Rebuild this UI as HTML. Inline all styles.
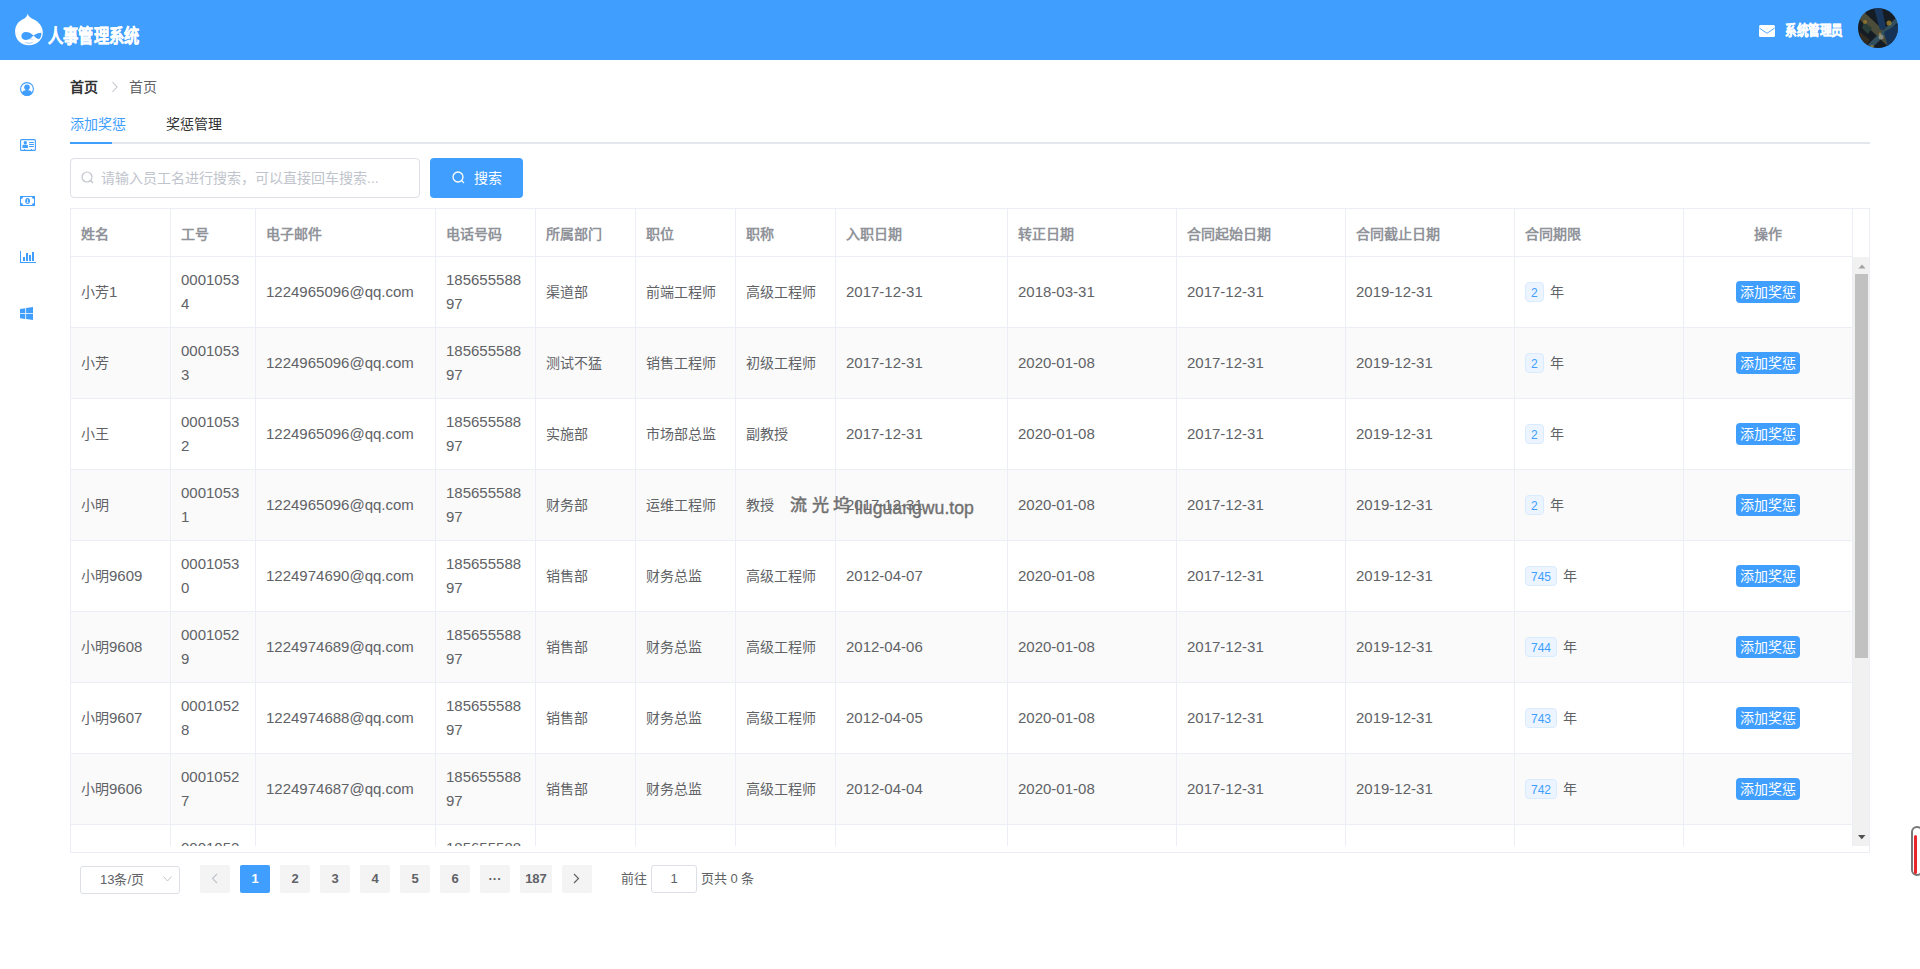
<!DOCTYPE html>
<html lang="zh-CN"><head><meta charset="utf-8">
<style>
*{box-sizing:border-box;margin:0;padding:0}
html,body{width:1920px;height:969px;overflow:hidden;background:#fff}
body{position:relative;font-family:"Liberation Sans",sans-serif;font-size:14px;color:#606266}
.abs{position:absolute}
.hdr{left:0;top:0;width:1920px;height:60px;background:#409EFF}
.logo{left:15px;top:13px;width:29px;height:33px}
.title{left:48px;top:24px;height:26px;font-size:19px;font-weight:bold;color:#fff;-webkit-text-stroke:0.4px #fff;line-height:26px;white-space:nowrap;transform:scaleX(0.80);transform-origin:0 50%}
.mail{left:1759px;top:25px;width:16px;height:12px}
.uname{left:1785px;top:20px;font-size:14px;font-weight:bold;color:#fff;-webkit-text-stroke:0.4px #fff;line-height:20px;white-space:nowrap;transform:scaleX(0.83);transform-origin:0 50%}
.avatar{left:1858px;top:8px;width:40px;height:40px;border-radius:50%;overflow:hidden}
.side svg{position:absolute}
.bc{top:78px;line-height:18px;white-space:nowrap}
.tabs{left:70px;top:142px;width:1800px;height:2px;background:#E4E7ED}
.tabbar{left:70px;top:142px;width:42px;height:2px;background:#409EFF}
.tab{top:114px;line-height:20px;white-space:nowrap}
.inp{left:70px;top:158px;width:350px;height:40px;border:1px solid #DCDFE6;border-radius:4px}
.ph{left:101px;top:168px;line-height:20px;color:#C0C4CC;white-space:nowrap}
.sbtn{left:430px;top:158px;width:93px;height:40px;background:#409EFF;border-radius:4px;color:#fff}
.tbl{left:70px;top:208px;width:1800px;height:645px;border:1px solid #EBEEF5;overflow:hidden;background:#fff}
table{border-collapse:separate;border-spacing:0;table-layout:fixed}
th,td{border-right:1px solid #EBEEF5;border-bottom:1px solid #EBEEF5;text-align:left;padding:0 10px;vertical-align:middle;overflow:hidden}
th{height:48px;color:#909399;font-weight:bold;white-space:nowrap}
td{height:71px;line-height:23px;color:#606266}
th.c,td.c{text-align:center}
tr.st td{background:#FAFAFA}
.bodyw{position:absolute;left:0;top:48px;width:1798px;height:589px;overflow:hidden}
.tag{display:inline-block;height:20px;line-height:20px;padding:0 5px;margin-right:2px;font-size:12px;color:#409EFF;background:#ECF5FF;border:1px solid #D9ECFF;border-radius:4px;vertical-align:middle}
.yr{vertical-align:middle}
.n{font-size:15px}
.abtn{display:inline-block;height:22px;line-height:22px;padding:0 4px;background:#409EFF;color:#fff;border-radius:4px;white-space:nowrap}
.sb{left:1853px;top:257px;width:16px;height:589px;background:#F1F1F1}
.pg{top:865px;height:28px;line-height:28px;text-align:center;font-weight:bold;color:#606266;background:#F4F4F5;border-radius:2px;font-size:13px}
.wm2{left:855px;top:495.5px;font-size:19px;line-height:24px;color:#707070;-webkit-text-stroke:0.4px #707070;white-space:nowrap;transform:scaleX(0.93);transform-origin:0 0}
.wm{left:790px;top:494px;font-size:17px;color:#707070;-webkit-text-stroke:0.5px #707070;white-space:nowrap;line-height:24px}
</style></head>
<body>
<div class="abs hdr"></div>
<svg class="abs" style="left:14px;top:13px" width="30" height="33" viewBox="0 0 30 33">
  <path d="M13.6 0.7 C14.5 3.5 17 5 20 6.5 C25 9 28.8 13.5 28.8 19.5 C28.8 27 22.5 32.3 14.8 32.3 C7 32.3 1.1 26.5 1.1 18.5 C1.1 12 5 8 9.5 6 C12 4.5 13.2 3 13.6 0.7Z" fill="#fff"/>
  <path d="M19.5 22.5 C17 20 14.5 19 12 19 C9 19 7.4 21 7.4 23 C7.4 25.5 9.5 27 12 27 C15 27 17.5 24.5 19.5 22.5 C21.5 21 24.5 19.7 27.4 19.7 C27.6 23 26.5 25.5 24.5 26.2 C22.5 25.5 21 24 19.5 22.5Z" fill="#409EFF"/>
  <path d="M15 26.5 C16 25.5 17.5 25.5 18.5 26.5" stroke="#409EFF" stroke-width="0.8" fill="none" opacity="0.6"/>
  <path d="M11.5 29.5 C13.5 30.5 16.5 30.5 18.5 29.5" stroke="#409EFF" stroke-width="0.9" fill="none" opacity="0.6"/>
</svg>
<div class="abs title">人事管理系统</div>
<svg class="abs mail" viewBox="0 0 16 12"><rect x="0" y="0" width="16" height="12" rx="1.5" fill="#fff"/><path d="M0.3 3 L8 8.3 L15.7 3" stroke="#409EFF" stroke-width="0.9" fill="none"/></svg>
<div class="abs uname">系统管理员</div>
<svg class="abs" style="left:1858px;top:8px" width="40" height="40" viewBox="0 0 40 40">
<defs><clipPath id="avc"><circle cx="20" cy="20" r="20"/></clipPath></defs>
<g clip-path="url(#avc)">
<rect width="40" height="40" fill="#161d24"/>
<g opacity="0.75">
<path d="M0 10 L6 4 L42 38 L36 44Z" fill="#5e5c40"/>
<path d="M16 0 L24 0 L28 20 L22 22Z" fill="#1b3f70"/>
<path d="M40 8 L40 14 L10 44 L4 42Z" fill="#3b6070"/>
<path d="M26 24 L40 16 L40 40 L30 40Z" fill="#173b66"/>
<path d="M2 24 L12 32 L6 40 L0 36Z" fill="#3a3020"/>
<path d="M6 14 L14 20 L10 26 L4 20Z" fill="#304a40"/>
</g>
<circle cx="31" cy="15" r="2.5" fill="#b89028" opacity="0.7"/>
<circle cx="7" cy="14" r="2" fill="#b89028" opacity="0.6"/>
<circle cx="14" cy="39" r="2" fill="#b89028" opacity="0.6"/>
<circle cx="23" cy="29" r="2.5" fill="#c8c0a0" opacity="0.55"/>
<circle cx="22" cy="26" r="1.5" fill="#c09030" opacity="0.6"/>
</g></svg>

<div class="side">
<svg style="left:20px;top:82px" width="14" height="14" viewBox="0 0 14 14"><circle cx="7" cy="7" r="6.4" fill="none" stroke="#409EFF" stroke-width="1.1"/><circle cx="7" cy="5.3" r="2.8" fill="#409EFF"/><path d="M1.8 11.2 C2.5 9 4.3 7.9 7 7.9 C9.7 7.9 11.5 9 12.2 11.2 C11 13 9 14 7 14 C5 14 3 13 1.8 11.2Z" fill="#409EFF"/></svg>
<svg style="left:20px;top:139px" width="16" height="12" viewBox="0 0 16 12"><rect x="0.6" y="0.6" width="14.8" height="10.8" rx="1" fill="none" stroke="#409EFF" stroke-width="1.1"/><circle cx="5.3" cy="3.8" r="1.7" fill="#409EFF"/><path d="M2.4 8.9 L2.4 7 C2.4 6.2 3 5.8 3.8 5.8 L6.6 5.8 C7.4 5.8 7.9 6.2 7.9 7 L7.9 8.9Z" fill="#409EFF"/><rect x="9" y="3" width="5" height="1" rx="0.5" fill="#409EFF"/><rect x="9" y="5" width="5" height="1" rx="0.5" fill="#409EFF"/><rect x="9" y="7" width="5" height="1" rx="0.5" fill="#409EFF"/><rect x="4" y="10" width="1" height="1.5" fill="#409EFF"/><rect x="11" y="10" width="1" height="1.5" fill="#409EFF"/></svg>
<svg style="left:20px;top:196px" width="15" height="10" viewBox="0 0 15 10"><rect x="0" y="0" width="15" height="10" fill="#409EFF"/><path d="M3 1 L12 1 A2 2 0 0 0 14 3 L14 7 A2 2 0 0 0 12 9 L3 9 A2 2 0 0 0 1 7 L1 3 A2 2 0 0 0 3 1Z" fill="#fff"/><ellipse cx="7.6" cy="5" rx="2.4" ry="2.9" fill="#409EFF"/><path d="M6.9 3.6 L7.9 3.2 L7.9 6.4 L8.7 6.4 L8.7 7 L6.5 7 L6.5 6.4 L7.2 6.4 L7.2 4.2 L6.9 4.3Z" fill="#fff"/></svg>
<svg style="left:20px;top:251px" width="16" height="12" viewBox="0 0 16 12"><rect x="0" y="0" width="1" height="12" fill="#409EFF"/><rect x="0" y="11" width="16" height="1" fill="#409EFF"/><rect x="3" y="6" width="2" height="4" fill="#409EFF"/><rect x="6" y="2" width="2" height="8" fill="#409EFF"/><rect x="9" y="4" width="2" height="6" fill="#409EFF"/><rect x="12" y="1" width="2" height="9" fill="#409EFF"/></svg>
<svg style="left:20px;top:307px" width="13" height="13" viewBox="0 0 13 13"><path d="M0 1.9 L5.3 1.2 L5.3 6.2 L0 6.2Z M6.1 1.1 L13 0 L13 6.2 L6.1 6.2Z M0 7 L5.3 7 L5.3 12 L0 11.2Z M6.1 7 L13 7 L13 13 L6.1 12.1Z" fill="#409EFF"/></svg>
</div>

<div class="abs bc" style="left:70px;font-weight:bold;color:#303133">首页</div>
<svg class="abs" style="left:111px;top:81px" width="8" height="12" viewBox="0 0 8 12"><path d="M1.5 1 L6 6 L1.5 11" stroke="#C0C4CC" stroke-width="1.1" fill="none"/></svg>
<div class="abs bc" style="left:129px;color:#606266">首页</div>

<div class="abs tab" style="left:70px;color:#409EFF">添加奖惩</div>
<div class="abs tab" style="left:166px;color:#303133">奖惩管理</div>
<div class="abs tabs"></div>
<div class="abs tabbar"></div>

<div class="abs inp"></div>
<svg class="abs" style="left:81px;top:171px" width="13" height="13" viewBox="0 0 13 13"><circle cx="6" cy="6" r="5" fill="none" stroke="#C0C4CC" stroke-width="1.2"/><path d="M9.5 9.5 L12 12" stroke="#C0C4CC" stroke-width="1.2"/></svg>
<div class="abs ph">请输入员工名进行搜索，可以直接回车搜索...</div>
<div class="abs sbtn"></div>
<svg class="abs" style="left:452px;top:171px" width="13" height="13" viewBox="0 0 13 13"><circle cx="6" cy="6" r="5" fill="none" stroke="#fff" stroke-width="1.3"/><path d="M9.5 9.5 L12 12" stroke="#fff" stroke-width="1.3"/></svg>
<div class="abs" style="left:474px;top:168px;line-height:20px;color:#fff">搜索</div>

<div class="abs tbl">
 <table style="width:1782px"><colgroup><col style="width:100px"><col style="width:85px"><col style="width:180px"><col style="width:100px"><col style="width:100px"><col style="width:100px"><col style="width:100px"><col style="width:172px"><col style="width:169px"><col style="width:169px"><col style="width:169px"><col style="width:169px"><col style="width:169px"></colgroup><tr><th class="">姓名</th><th class="">工号</th><th class="">电子邮件</th><th class="">电话号码</th><th class="">所属部门</th><th class="">职位</th><th class="">职称</th><th class="">入职日期</th><th class="">转正日期</th><th class="">合同起始日期</th><th class="">合同截止日期</th><th class="">合同期限</th><th class="c">操作</th></tr></table>
 <div class="bodyw"><table style="width:1782px"><colgroup><col style="width:100px"><col style="width:85px"><col style="width:180px"><col style="width:100px"><col style="width:100px"><col style="width:100px"><col style="width:100px"><col style="width:172px"><col style="width:169px"><col style="width:169px"><col style="width:169px"><col style="width:169px"><col style="width:169px"></colgroup>
<tr class=""><td>小芳<span class="n">1</span></td><td><span class="n">0001053</span><br><span class="n">4</span></td><td><span class="n">1224965096@qq.com</span></td><td><span class="n">185655588</span><br><span class="n">97</span></td><td>渠道部</td><td>前端工程师</td><td>高级工程师</td><td><span class="n">2017-12-31</span></td><td><span class="n">2018-03-31</span></td><td><span class="n">2017-12-31</span></td><td><span class="n">2019-12-31</span></td><td><span class="tag">2</span> <span class="yr">年</span></td><td class="c"><span class="abtn">添加奖惩</span></td></tr>
<tr class="st"><td>小芳</td><td><span class="n">0001053</span><br><span class="n">3</span></td><td><span class="n">1224965096@qq.com</span></td><td><span class="n">185655588</span><br><span class="n">97</span></td><td>测试不猛</td><td>销售工程师</td><td>初级工程师</td><td><span class="n">2017-12-31</span></td><td><span class="n">2020-01-08</span></td><td><span class="n">2017-12-31</span></td><td><span class="n">2019-12-31</span></td><td><span class="tag">2</span> <span class="yr">年</span></td><td class="c"><span class="abtn">添加奖惩</span></td></tr>
<tr class=""><td>小王</td><td><span class="n">0001053</span><br><span class="n">2</span></td><td><span class="n">1224965096@qq.com</span></td><td><span class="n">185655588</span><br><span class="n">97</span></td><td>实施部</td><td>市场部总监</td><td>副教授</td><td><span class="n">2017-12-31</span></td><td><span class="n">2020-01-08</span></td><td><span class="n">2017-12-31</span></td><td><span class="n">2019-12-31</span></td><td><span class="tag">2</span> <span class="yr">年</span></td><td class="c"><span class="abtn">添加奖惩</span></td></tr>
<tr class="st"><td>小明</td><td><span class="n">0001053</span><br><span class="n">1</span></td><td><span class="n">1224965096@qq.com</span></td><td><span class="n">185655588</span><br><span class="n">97</span></td><td>财务部</td><td>运维工程师</td><td>教授</td><td><span class="n">2017-12-31</span></td><td><span class="n">2020-01-08</span></td><td><span class="n">2017-12-31</span></td><td><span class="n">2019-12-31</span></td><td><span class="tag">2</span> <span class="yr">年</span></td><td class="c"><span class="abtn">添加奖惩</span></td></tr>
<tr class=""><td>小明<span class="n">9609</span></td><td><span class="n">0001053</span><br><span class="n">0</span></td><td><span class="n">1224974690@qq.com</span></td><td><span class="n">185655588</span><br><span class="n">97</span></td><td>销售部</td><td>财务总监</td><td>高级工程师</td><td><span class="n">2012-04-07</span></td><td><span class="n">2020-01-08</span></td><td><span class="n">2017-12-31</span></td><td><span class="n">2019-12-31</span></td><td><span class="tag">745</span> <span class="yr">年</span></td><td class="c"><span class="abtn">添加奖惩</span></td></tr>
<tr class="st"><td>小明<span class="n">9608</span></td><td><span class="n">0001052</span><br><span class="n">9</span></td><td><span class="n">1224974689@qq.com</span></td><td><span class="n">185655588</span><br><span class="n">97</span></td><td>销售部</td><td>财务总监</td><td>高级工程师</td><td><span class="n">2012-04-06</span></td><td><span class="n">2020-01-08</span></td><td><span class="n">2017-12-31</span></td><td><span class="n">2019-12-31</span></td><td><span class="tag">744</span> <span class="yr">年</span></td><td class="c"><span class="abtn">添加奖惩</span></td></tr>
<tr class=""><td>小明<span class="n">9607</span></td><td><span class="n">0001052</span><br><span class="n">8</span></td><td><span class="n">1224974688@qq.com</span></td><td><span class="n">185655588</span><br><span class="n">97</span></td><td>销售部</td><td>财务总监</td><td>高级工程师</td><td><span class="n">2012-04-05</span></td><td><span class="n">2020-01-08</span></td><td><span class="n">2017-12-31</span></td><td><span class="n">2019-12-31</span></td><td><span class="tag">743</span> <span class="yr">年</span></td><td class="c"><span class="abtn">添加奖惩</span></td></tr>
<tr class="st"><td>小明<span class="n">9606</span></td><td><span class="n">0001052</span><br><span class="n">7</span></td><td><span class="n">1224974687@qq.com</span></td><td><span class="n">185655588</span><br><span class="n">97</span></td><td>销售部</td><td>财务总监</td><td>高级工程师</td><td><span class="n">2012-04-04</span></td><td><span class="n">2020-01-08</span></td><td><span class="n">2017-12-31</span></td><td><span class="n">2019-12-31</span></td><td><span class="tag">742</span> <span class="yr">年</span></td><td class="c"><span class="abtn">添加奖惩</span></td></tr>
<tr class=""><td></td><td><span class="n">0001052</span><br><span class="n">6</span></td><td></td><td><span class="n">185655588</span><br><span class="n">97</span></td><td></td><td></td><td></td><td></td><td></td><td></td><td></td><td></td><td></td></tr>
</table></div>
</div>
<div class="abs sb"></div>
<svg class="abs" style="left:1858px;top:263.5px" width="8" height="5" viewBox="0 0 8 5"><path d="M0.5 4.5 L4 0.5 L7.5 4.5Z" fill="#A3A3A3"/></svg>
<div class="abs" style="left:1855px;top:274px;width:13px;height:384px;background:#C1C1C1"></div>
<svg class="abs" style="left:1858px;top:835px" width="8" height="5" viewBox="0 0 8 5"><path d="M0 0 L7.5 0 L3.75 4.2Z" fill="#505050"/></svg>

<div class="abs" style="left:80px;top:866px;width:100px;height:28px;border:1px solid #DCDFE6;border-radius:3px"></div>
<div class="abs" style="left:100px;top:866px;line-height:28px;font-size:13px;color:#606266">13条/页</div>
<svg class="abs" style="left:163px;top:876px" width="9" height="6" viewBox="0 0 9 6"><path d="M0.5 0.5 L4.5 5 L8.5 0.5" stroke="#C0C4CC" stroke-width="1" fill="none"/></svg>

<div class="abs pg" style="left:200px;width:30px"></div>
<svg class="abs" style="left:211px;top:873px" width="7" height="11" viewBox="0 0 7 11"><path d="M6 1 L1.5 5.5 L6 10" stroke="#C0C4CC" stroke-width="1.2" fill="none"/></svg>
<div class="abs pg" style="left:240px;width:30px;background:#409EFF;color:#fff">1</div>
<div class="abs pg" style="left:280px;width:30px">2</div>
<div class="abs pg" style="left:320px;width:30px">3</div>
<div class="abs pg" style="left:360px;width:30px">4</div>
<div class="abs pg" style="left:400px;width:30px">5</div>
<div class="abs pg" style="left:440px;width:30px">6</div>
<div class="abs pg" style="left:480px;width:30px">···</div>
<div class="abs pg" style="left:520px;width:32px">187</div>
<div class="abs pg" style="left:562px;width:30px"></div>
<svg class="abs" style="left:573px;top:873px" width="7" height="11" viewBox="0 0 7 11"><path d="M1 1 L5.5 5.5 L1 10" stroke="#606266" stroke-width="1.2" fill="none"/></svg>
<div class="abs" style="left:621px;top:865px;line-height:28px;font-size:13px;color:#606266">前往</div>
<div class="abs" style="left:651px;top:865px;width:46px;height:28px;border:1px solid #DCDFE6;border-radius:3px;text-align:center;line-height:26px;font-size:13px;color:#606266">1</div>
<div class="abs" style="left:701px;top:865px;line-height:28px;font-size:13px;color:#606266;white-space:nowrap">页共 0 条</div>

<div class="abs wm">流 光 坞</div><div class="abs wm2">liuguangwu.top</div>

<div class="abs" style="left:1911px;top:826px;width:12px;height:50px;border:2px solid #777;border-radius:6px"></div>
<div class="abs" style="left:1914px;top:835px;width:3px;height:39px;background:#E8262B;border-radius:2px"></div>
</body></html>
